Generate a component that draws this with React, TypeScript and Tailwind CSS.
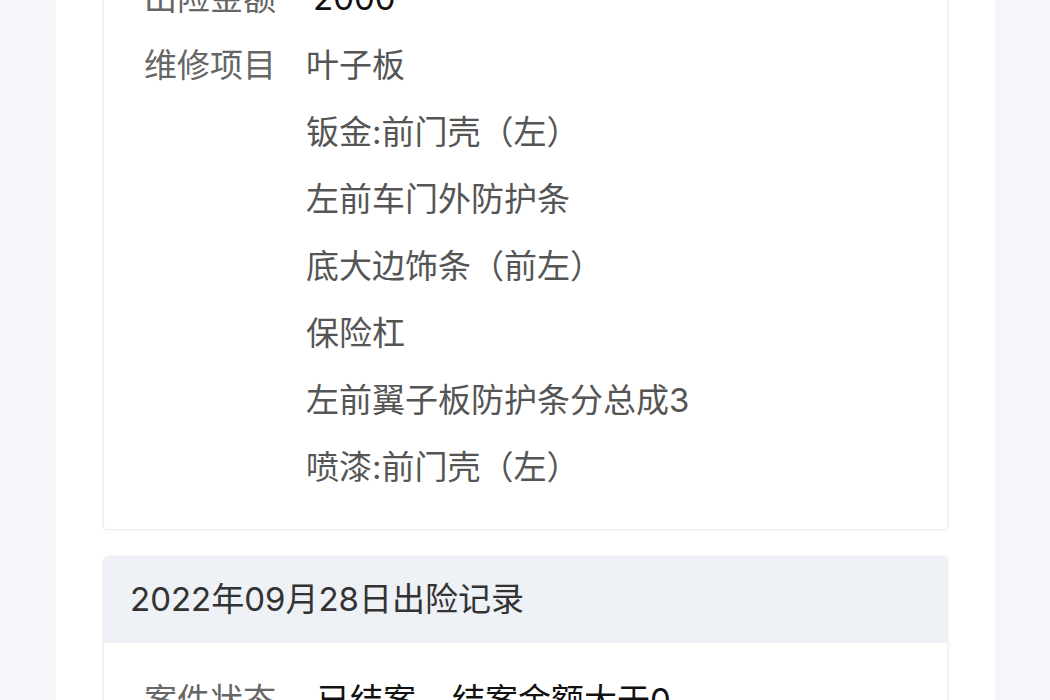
const repairItems = [
  "叶子板",
  "钣金:前门壳（左）",
  "左前车门外防护条",
  "底大边饰条（前左）",
  "保险杠",
  "左前翼子板防护条分总成3",
  "喷漆:前门壳（左）",
];

function Row({ label, children }: { label: string; children: React.ReactNode }) {
  return (
    <div className="flex leading-[67px]">
      <div className="w-[162px] shrink-0 text-[#666]">{label}</div>
      <div className="flex-1">{children}</div>
    </div>
  );
}

export default function App() {
  return (
    <div
      className="flex h-[700px] w-[1050px] overflow-hidden bg-white text-[33px]"
      style={{ fontFamily: 'Inter, "Noto Sans CJK SC", sans-serif' }}
    >
      <div className="w-[56px] shrink-0 bg-[#f5f6f9]" />

      <div className="flex-1 px-[47px]">
        <div className="-mt-[60px] rounded-[4px] border border-[#eceef1] bg-white pb-[28px] pl-[40px] pt-[24px] shadow-[0_0_4px_rgba(0,0,0,0.05)]">
          <Row label="出险金额">
            <span className="ml-[7px] text-[#111]">2000</span>
          </Row>
          <Row label="维修项目">
            <div className="flex flex-col text-[#555]">
              {repairItems.map((item) => (
                <span key={item}>{item}</span>
              ))}
            </div>
          </Row>
        </div>

        <div className="mt-[26px] overflow-hidden rounded-[6px] border border-[#eceef1] bg-white shadow-[0_0_4px_rgba(0,0,0,0.05)]">
          <div className="flex h-[86px] items-center bg-[#eef1f5] px-[26px] text-[#333]">
            2022年09月28日出险记录
          </div>
          <div className="pl-[40px] pt-[24px]">
            <div className="flex leading-[67px]">
              <div className="w-[173px] shrink-0 text-[#666]">案件状态</div>
              <div className="flex gap-[36px] text-[#111]">
                <span>已结案</span>
                <span>结案金额大于0</span>
              </div>
            </div>
          </div>
        </div>
      </div>

      <div className="w-[55px] shrink-0 bg-[#f5f6f9]" />
    </div>
  );
}
